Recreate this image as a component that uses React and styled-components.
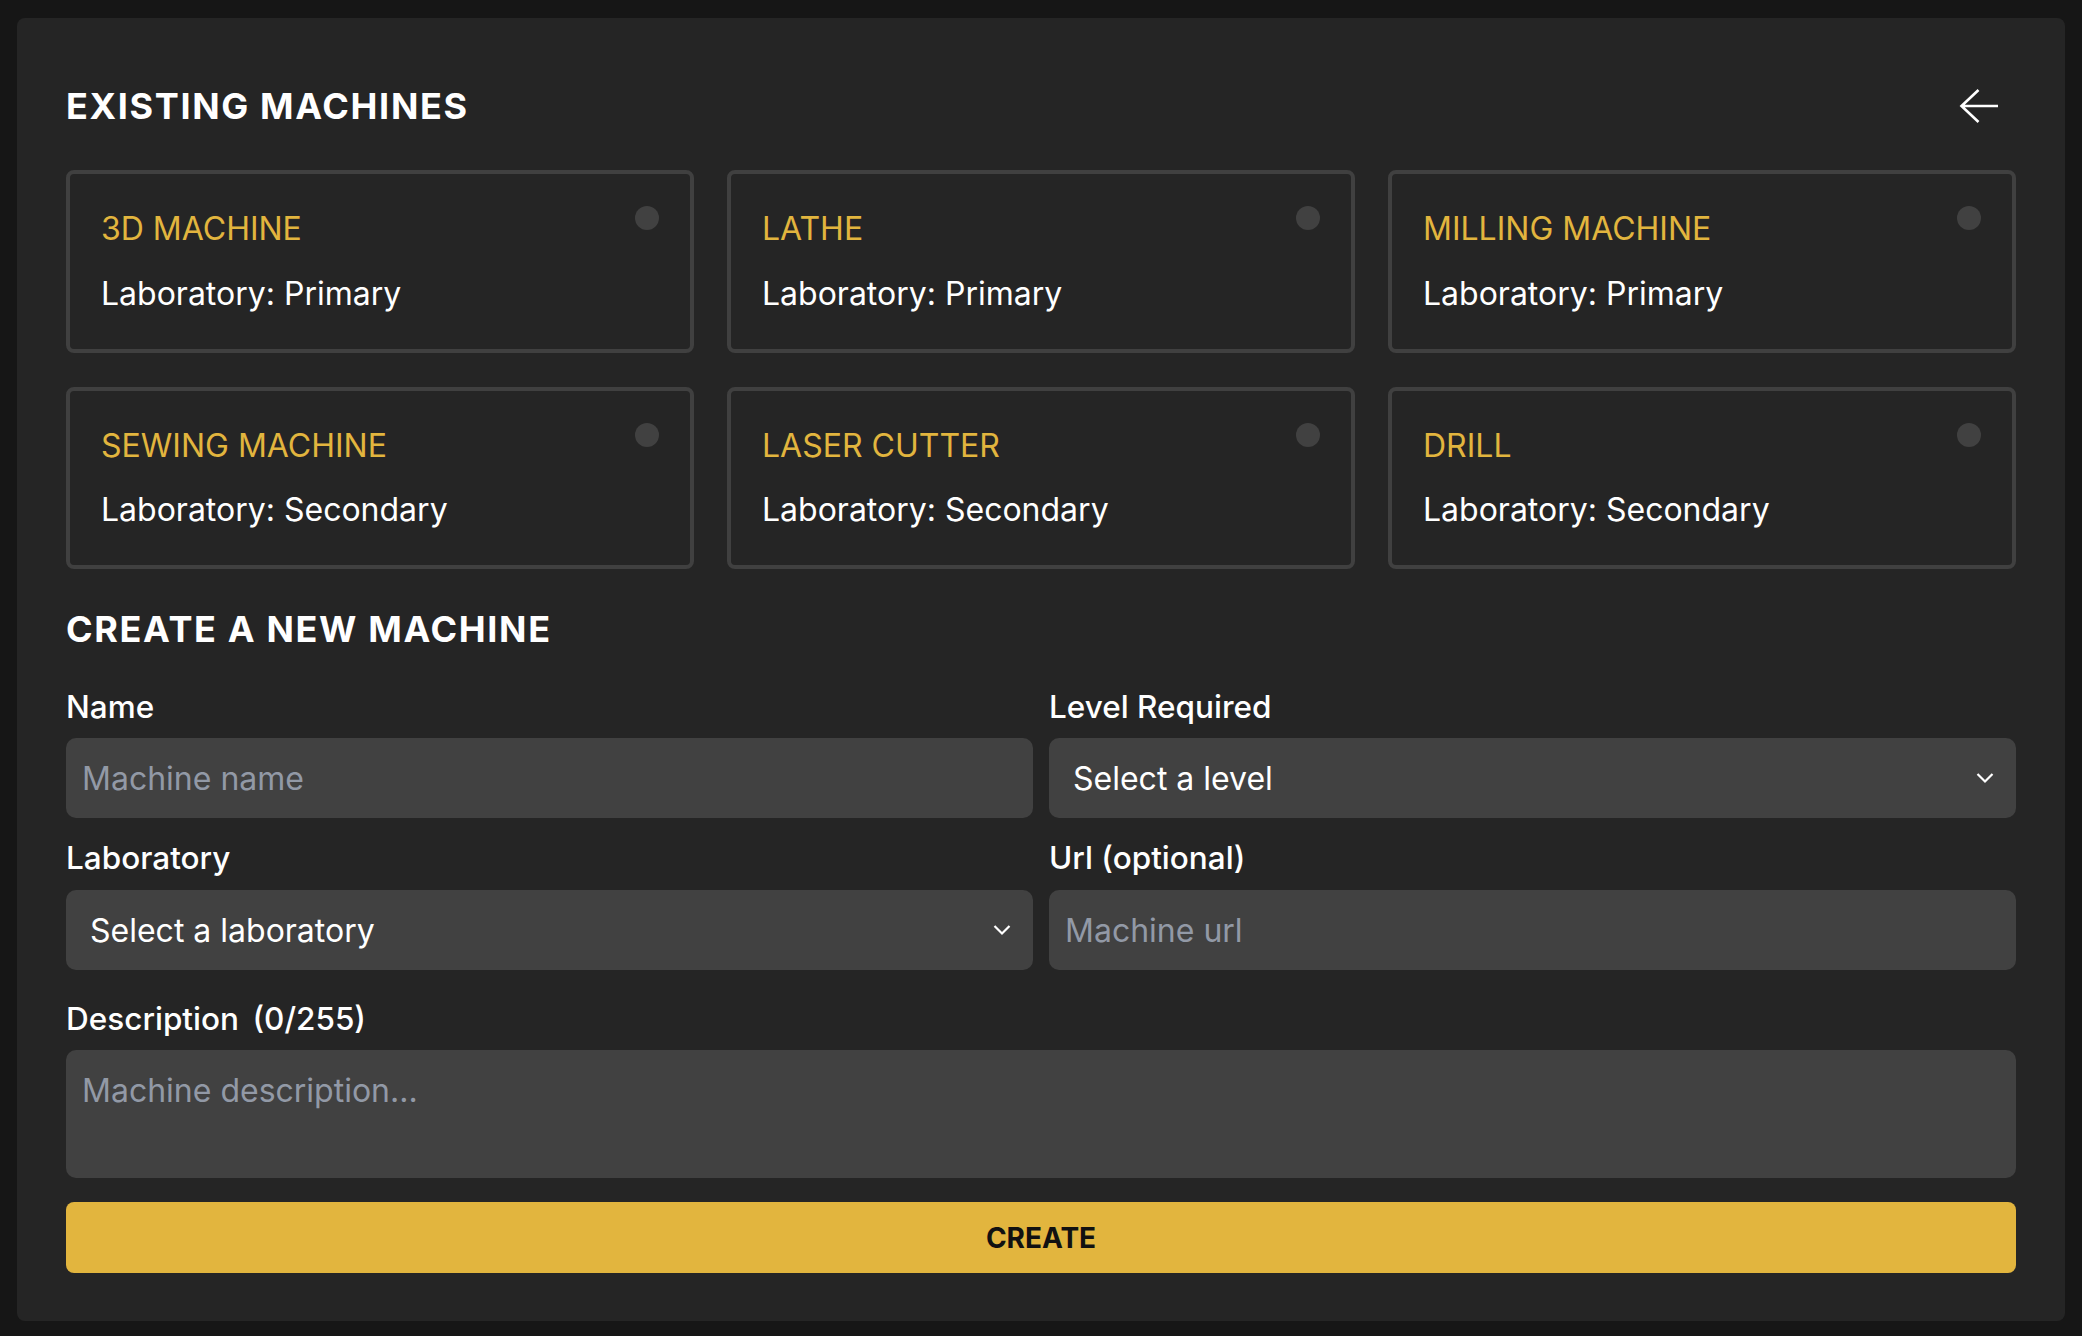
import React, { useState } from 'react';
import styled, { createGlobalStyle } from 'styled-components';

const GlobalStyle = createGlobalStyle`
  * {
    box-sizing: border-box;
  }

  body {
    margin: 0;
    background: #161616;
    font-family: Inter, 'Noto Sans', 'Liberation Sans', sans-serif;
    color: #fff;
  }
`;

const Page = styled.div`
  padding: 18px 17px 15px;
`;

const Panel = styled.div`
  background: #252525;
  border-radius: 8px;
  padding: 66px 49px 48px;
`;

const Header = styled.div`
  display: flex;
  align-items: center;
  justify-content: space-between;
  margin-bottom: 42px;
`;

const Heading = styled.h2`
  margin: ${(props) => props.$top || 0}px 0 0;
  font-size: 36px;
  line-height: 44px;
  font-weight: 700;
  letter-spacing: 1.65px;
  text-transform: uppercase;
  color: #fff;
`;

const BackButton = styled.button`
  display: flex;
  align-items: center;
  justify-content: center;
  margin-right: 17px;
  padding: 0;
  border: none;
  background: transparent;
  cursor: pointer;
`;

const CardGrid = styled.div`
  display: grid;
  grid-template-columns: repeat(3, 1fr);
  column-gap: 33px;
  row-gap: 34px;
`;

const Card = styled.div`
  position: relative;
  border: 4px solid #404040;
  border-radius: 8px;
  padding: 36px 31px 35px;
`;

const CardTitle = styled.div`
  font-size: 32px;
  line-height: 38px;
  color: #e2b53e;
  text-transform: uppercase;
`;

const CardText = styled.div`
  margin-top: 25.5px;
  font-size: 32px;
  line-height: 40px;
  color: #fff;
`;

const StatusDot = styled.span`
  position: absolute;
  top: 32px;
  right: 31px;
  width: 24px;
  height: 24px;
  border-radius: 50%;
  background: #414141;
`;

const FormGrid = styled.div`
  display: grid;
  grid-template-columns: 1fr 1fr;
  column-gap: 16px;
  row-gap: 21px;
  margin-top: 36.5px;
`;

const Field = styled.div`
  display: flex;
  flex-direction: column;
  gap: 12.75px;
  margin-top: ${(props) => props.$top || 0}px;
`;

const Label = styled.label`
  font-size: 31.5px;
  line-height: 38px;
  font-weight: 500;
  color: #fff;
`;

const Counter = styled.span`
  margin-left: 5px;
`;

const TextInput = styled.input`
  width: 100%;
  height: 80px;
  padding: 0 16px;
  border: none;
  border-radius: 10px;
  background: #414141;
  color: #fff;
  font-family: inherit;
  font-size: 32px;
  outline: none;

  &::placeholder {
    color: #9299a6;
  }
`;

const SelectWrap = styled.div`
  position: relative;
`;

const Select = styled.select`
  width: 100%;
  height: 80px;
  padding: 0 60px 0 24px;
  border: none;
  border-radius: 10px;
  background: #414141;
  color: #fff;
  font-family: inherit;
  font-size: 32px;
  appearance: none;
  outline: none;
`;

const Chevron = styled.svg`
  position: absolute;
  top: 50%;
  right: 22px;
  width: 18px;
  height: 11px;
  transform: translateY(-50%);
  pointer-events: none;
`;

const TextArea = styled.textarea`
  width: 100%;
  height: 128px;
  padding: 17px 16px;
  border: none;
  border-radius: 10px;
  background: #414141;
  color: #fff;
  font-family: inherit;
  font-size: 32px;
  line-height: 48px;
  resize: none;
  outline: none;

  &::placeholder {
    color: #9299a6;
  }
`;

const CreateButton = styled.button`
  width: 100%;
  height: 71px;
  margin-top: 24px;
  border: none;
  border-radius: 8px;
  background: #e2b53e;
  color: #111;
  font-family: inherit;
  font-size: 28px;
  font-weight: 700;
  text-transform: uppercase;
  cursor: pointer;
`;

const machines = [
  { id: 1, name: '3D Machine', lab: 'Primary' },
  { id: 2, name: 'Lathe', lab: 'Primary' },
  { id: 3, name: 'Milling Machine', lab: 'Primary' },
  { id: 4, name: 'Sewing Machine', lab: 'Secondary' },
  { id: 5, name: 'Laser Cutter', lab: 'Secondary' },
  { id: 6, name: 'Drill', lab: 'Secondary' },
];

const ArrowLeft = () => (
  <svg width="40" height="34" viewBox="0 0 40 34" fill="none">
    <path d="M39 17H2.5M19.5 1L2.5 17L19.5 33" stroke="#fff" strokeWidth="2.6" />
  </svg>
);

const ChevronDown = () => (
  <Chevron viewBox="0 0 18 11" fill="none">
    <path d="M1.5 1.5L9 9L16.5 1.5" stroke="#fff" strokeWidth="2.2" />
  </Chevron>
);

const App = () => {
  const [description, setDescription] = useState('');

  return (
    <Page>
      <GlobalStyle />
      <Panel>
        <Header>
          <Heading>Existing Machines</Heading>
          <BackButton aria-label="Back">
            <ArrowLeft />
          </BackButton>
        </Header>

        <CardGrid>
          {machines.map((machine) => (
            <Card key={machine.id}>
              <CardTitle>{machine.name}</CardTitle>
              <CardText>Laboratory: {machine.lab}</CardText>
              <StatusDot />
            </Card>
          ))}
        </CardGrid>

        <Heading $top={38}>Create a new machine</Heading>

        <FormGrid>
          <Field>
            <Label>Name</Label>
            <TextInput placeholder="Machine name" />
          </Field>
          <Field>
            <Label>Level Required</Label>
            <SelectWrap>
              <Select defaultValue="">
                <option value="">Select a level</option>
                <option value="1">Level 1</option>
                <option value="2">Level 2</option>
              </Select>
              <ChevronDown />
            </SelectWrap>
          </Field>
          <Field>
            <Label>Laboratory</Label>
            <SelectWrap>
              <Select defaultValue="">
                <option value="">Select a laboratory</option>
                <option value="primary">Primary</option>
                <option value="secondary">Secondary</option>
              </Select>
              <ChevronDown />
            </SelectWrap>
          </Field>
          <Field>
            <Label>Url (optional)</Label>
            <TextInput placeholder="Machine url" />
          </Field>
        </FormGrid>

        <Field $top={29.5}>
          <Label>
            Description <Counter>({description.length}/255)</Counter>
          </Label>
          <TextArea
            placeholder="Machine description..."
            maxLength={255}
            value={description}
            onChange={(e) => setDescription(e.target.value)}
          />
        </Field>

        <CreateButton>Create</CreateButton>
      </Panel>
    </Page>
  );
};

export default App;
